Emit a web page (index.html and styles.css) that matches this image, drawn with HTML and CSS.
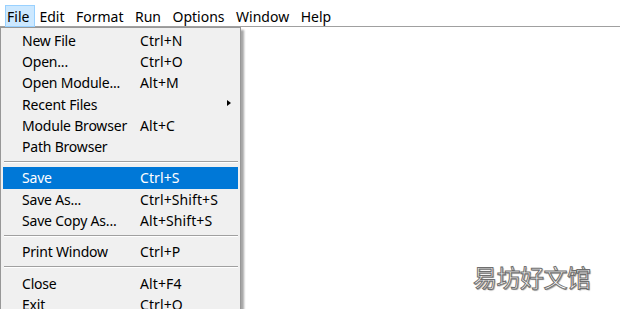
FILE: index.html
```html
<!DOCTYPE html>
<html lang="en">
<head>
  <meta charset="UTF-8" />
  <title>IDLE - File menu</title>
  <link rel="stylesheet" href="styles.css">
</head>
<body>

<div class="menubar">
  <span class="menu-title active">File</span>
  <span class="menu-title">Edit</span>
  <span class="menu-title">Format</span>
  <span class="menu-title">Run</span>
  <span class="menu-title">Options</span>
  <span class="menu-title">Window</span>
  <span class="menu-title">Help</span>
</div>

<div class="dropdown">
  <div class="item"><span class="label">New File</span><span class="keys">Ctrl+N</span></div>
  <div class="item"><span class="label">Open...</span><span class="keys">Ctrl+O</span></div>
  <div class="item"><span class="label">Open Module...</span><span class="keys">Alt+M</span></div>
  <div class="item"><span class="label">Recent Files</span><span class="keys"></span><span class="arrow"></span></div>
  <div class="item"><span class="label">Module Browser</span><span class="keys">Alt+C</span></div>
  <div class="item"><span class="label">Path Browser</span><span class="keys"></span></div>
  <div class="sep"></div>
  <div class="item selected"><span class="label">Save</span><span class="keys">Ctrl+S</span></div>
  <div class="item"><span class="label">Save As...</span><span class="keys">Ctrl+Shift+S</span></div>
  <div class="item"><span class="label">Save Copy As...</span><span class="keys">Alt+Shift+S</span></div>
  <div class="sep"></div>
  <div class="item"><span class="label">Print Window</span><span class="keys">Ctrl+P</span></div>
  <div class="sep"></div>
  <div class="item"><span class="label">Close</span><span class="keys">Alt+F4</span></div>
  <div class="item"><span class="label">Exit</span><span class="keys">Ctrl+Q</span></div>
</div>

<div class="watermark">易坊好文馆</div>

</body>
</html>
```

FILE: styles.css
```css
body {
  margin: 0;
  background: #ffffff;
  font-family: "Noto Sans", "Open Sans", sans-serif;
  font-size: 14px;
  color: #000;
  height: 309px;
  overflow: hidden;
  position: relative;
}

/* ===== menu bar ===== */
.menubar {
  display: flex;
  height: 27px;
  padding: 5px 0 0 5px;
  box-sizing: border-box;
  border-bottom: 1px solid #a0a0a0;
}

.menu-title {
  height: 22px;
  line-height: 21px;
  padding: 0 6.5px 0 1px;
  margin-right: 2px;
  box-sizing: border-box;
  border: 1px solid transparent;
}

.menu-title.active {
  background: #cce8ff;
  border-color: #99d1ff;
  padding-right: 5px;
}

/* ===== dropdown ===== */
.dropdown {
  position: absolute;
  top: 27px;
  left: 0;
  width: 241px;
  height: 300px;
  box-sizing: border-box;
  background: #f0f0f0;
  border: 1px solid #979797;
  padding: 1.5px 2px 0 2px;
  box-shadow: 3px 3px 2px rgba(0, 0, 0, 0.35);
}

.item {
  display: flex;
  align-items: center;
  height: 21.3px;
  padding-left: 19px;
  position: relative;
}

.label {
  width: 118px;
  letter-spacing: -0.2px;
}

.keys {
  flex: 1;
  letter-spacing: 0.1px;
}

.item.selected {
  background: #0078d7;
  color: #ffffff;
}

.arrow {
  position: absolute;
  right: 7px;
  top: 7px;
  width: 0;
  height: 0;
  border-top: 3.5px solid transparent;
  border-bottom: 3.5px solid transparent;
  border-left: 4px solid #000;
}

.sep {
  height: 10px;
  position: relative;
}

.sep::after {
  content: "";
  position: absolute;
  left: 1px;
  right: 0;
  top: 4px;
  height: 1px;
  background: #a0a0a0;
  border-bottom: 1px solid #ffffff;
}

/* ===== watermark ===== */
.watermark {
  position: absolute;
  left: 473px;
  top: 259px;
  font-family: "Noto Sans CJK SC", sans-serif;
  font-size: 24px;
  color: #ffffff;
  -webkit-text-stroke: 1px #6e6e6e;
  text-shadow: 1px 1px 1px #9a9a9a;
  letter-spacing: -0.5px;
}
```
